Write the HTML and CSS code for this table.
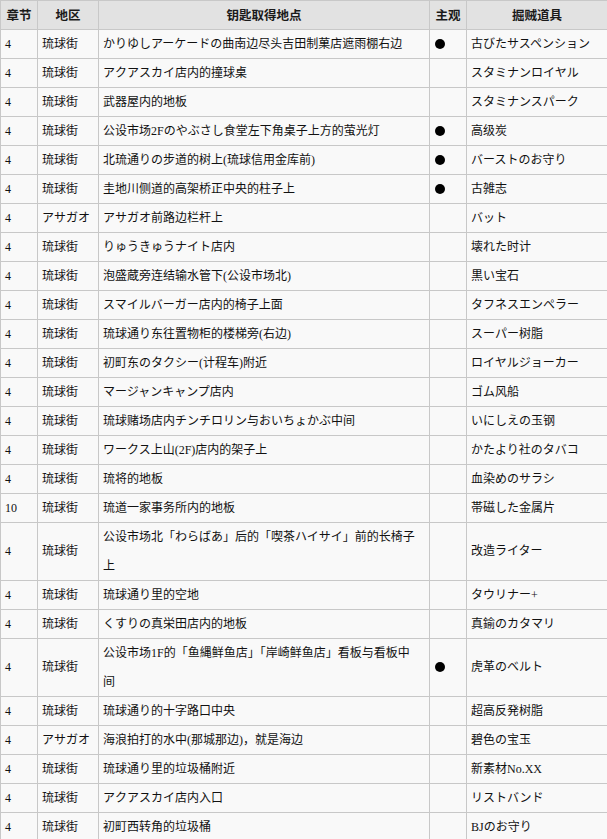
FILE: index.html
```html
<!DOCTYPE html>
<html lang="zh">
<head>
<meta charset="utf-8">
<link rel="stylesheet" href="styles.css">
</head>
<body>
<table class="keys">
<colgroup>
<col class="c-ch"><col class="c-area"><col class="c-place"><col class="c-sub"><col class="c-item">
</colgroup>
<thead>
<tr><th>章节</th><th>地区</th><th>钥匙取得地点</th><th>主观</th><th>掘贼道具</th></tr>
</thead>
<tbody>
<tr><td>4</td><td>琉球街</td><td class="place">かりゆしアーケードの曲南边尽头吉田制菓店遮雨棚右边</td><td><span class="dot"></span></td><td>古びたサスペンション</td></tr>
<tr><td>4</td><td>琉球街</td><td class="place">アクアスカイ店内的撞球桌</td><td></td><td>スタミナンロイヤル</td></tr>
<tr><td>4</td><td>琉球街</td><td class="place">武器屋内的地板</td><td></td><td>スタミナンスパーク</td></tr>
<tr><td>4</td><td>琉球街</td><td class="place">公设市场2Fのやぶさし食堂左下角桌子上方的萤光灯</td><td><span class="dot"></span></td><td>高级炭</td></tr>
<tr><td>4</td><td>琉球街</td><td class="place">北琉通りの步道的树上(琉球信用金库前)</td><td><span class="dot"></span></td><td>バーストのお守り</td></tr>
<tr><td>4</td><td>琉球街</td><td class="place">圭地川侧道的高架桥正中央的柱子上</td><td><span class="dot"></span></td><td>古雑志</td></tr>
<tr><td>4</td><td>アサガオ</td><td class="place">アサガオ前路边栏杆上</td><td></td><td>バット</td></tr>
<tr><td>4</td><td>琉球街</td><td class="place">りゅうきゅうナイト店内</td><td></td><td>壊れた时计</td></tr>
<tr><td>4</td><td>琉球街</td><td class="place">泡盛蔵旁连结输水管下(公设市场北)</td><td></td><td>黒い宝石</td></tr>
<tr><td>4</td><td>琉球街</td><td class="place">スマイルバーガー店内的椅子上面</td><td></td><td>タフネスエンペラー</td></tr>
<tr><td>4</td><td>琉球街</td><td class="place">琉球通り东往置物柜的楼梯旁(右边)</td><td></td><td>スーパー树脂</td></tr>
<tr><td>4</td><td>琉球街</td><td class="place">初町东のタクシー(计程车)附近</td><td></td><td>ロイヤルジョーカー</td></tr>
<tr><td>4</td><td>琉球街</td><td class="place">マージャンキャンプ店内</td><td></td><td>ゴム风船</td></tr>
<tr><td>4</td><td>琉球街</td><td class="place">琉球赌场店内チンチロリン与おいちょかぶ中间</td><td></td><td>いにしえの玉钢</td></tr>
<tr><td>4</td><td>琉球街</td><td class="place">ワークス上山(2F)店内的架子上</td><td></td><td>かたより社のタバコ</td></tr>
<tr><td>4</td><td>琉球街</td><td class="place">琉将的地板</td><td></td><td>血染めのサラシ</td></tr>
<tr><td>10</td><td>琉球街</td><td class="place">琉道一家事务所内的地板</td><td></td><td>帯磁した金属片</td></tr>
<tr class="tall"><td>4</td><td>琉球街</td><td class="place">公设市场北「わらばあ」后的「喫茶ハイサイ」前的长椅子上</td><td></td><td>改造ライター</td></tr>
<tr><td>4</td><td>琉球街</td><td class="place">琉球通り里的空地</td><td></td><td>タウリナー+</td></tr>
<tr><td>4</td><td>琉球街</td><td class="place">くすりの真栄田店内的地板</td><td></td><td>真鍮のカタマリ</td></tr>
<tr class="tall"><td>4</td><td>琉球街</td><td class="place">公设市场1F的「鱼縄鲜鱼店」「岸崎鲜鱼店」看板与看板中间</td><td><span class="dot"></span></td><td>虎革のベルト</td></tr>
<tr><td>4</td><td>琉球街</td><td class="place">琉球通り的十字路口中央</td><td></td><td>超高反発树脂</td></tr>
<tr><td>4</td><td>アサガオ</td><td class="place">海浪拍打的水中(那城那边)，就是海边</td><td></td><td>碧色の宝玉</td></tr>
<tr><td>4</td><td>琉球街</td><td class="place">琉球通り里的垃圾桶附近</td><td></td><td>新素材No.XX</td></tr>
<tr><td>4</td><td>琉球街</td><td class="place">アクアスカイ店内入口</td><td></td><td>リストバンド</td></tr>
<tr><td>4</td><td>琉球街</td><td class="place">初町西转角的垃圾桶</td><td></td><td>BJのお守り</td></tr>
</tbody>
</table>
</body>
</html>
```

FILE: styles.css
```css
html, body {
  margin: 0;
  padding: 0;
  background: #ffffff;
}

.keys {
  width: 607px;
  table-layout: fixed;
  border-collapse: collapse;
  font-family: "Liberation Serif", "Noto Sans CJK SC", sans-serif;
  font-size: 12px;
  color: #111;
}

.c-ch { width: 37px; }
.c-area { width: 61px; }
.c-place { width: 331px; }
.c-sub { width: 37px; }
.c-item { width: 141px; }

.keys th,
.keys td {
  border: 1px solid #c8c8c8;
  padding: 0 4px;
  line-height: 28px;
  height: 28px;
  vertical-align: middle;
}

.keys th {
  background: #e2e2e2;
  font-family: "Noto Sans CJK SC", sans-serif;
  font-size: 12.5px;
  font-weight: bold;
  text-align: center;
  color: #1a1a1a;
  padding: 0;
}

.keys td {
  background: #f9f9f9;
  text-align: left;
  word-break: break-all;
}

.keys td.place {
  padding-right: 10px;
}

.keys tr.tall td {
  line-height: 28.5px;
}

.dot {
  display: inline-block;
  width: 10px;
  height: 10px;
  margin-left: 1px;
  border-radius: 50%;
  background: #000;
  vertical-align: -1px;
}
```
